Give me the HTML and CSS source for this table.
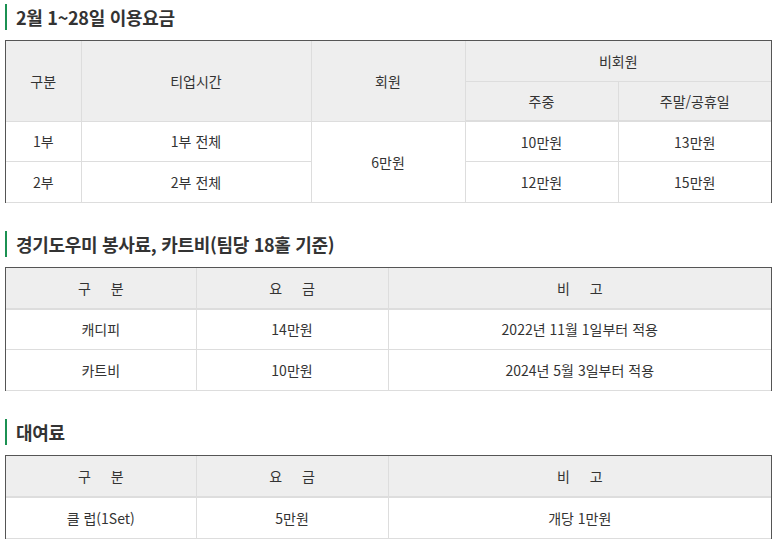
FILE: index.html
```html
<!DOCTYPE html>
<html lang="ko">
<head>
<meta charset="utf-8">
<link rel="stylesheet" href="styles.css">
</head>
<body>
<div class="page">
  <section class="section">
    <h2 class="title">2월 1~28일 이용요금</h2>
    <div class="tbl-wrap">
      <table class="tbl tbl-main">
        <colgroup><col class="c1-1"><col class="c1-2"><col class="c1-3"><col class="c1-4"><col></colgroup>
        <thead>
          <tr><th rowspan="2">구분</th><th rowspan="2">티업시간</th><th rowspan="2">회원</th><th colspan="2">비회원</th></tr>
          <tr><th>주중</th><th>주말/공휴일</th></tr>
        </thead>
        <tbody>
          <tr><td>1부</td><td>1부 전체</td><td rowspan="2">6만원</td><td>10만원</td><td>13만원</td></tr>
          <tr><td>2부</td><td>2부 전체</td><td>12만원</td><td>15만원</td></tr>
        </tbody>
      </table>
    </div>
  </section>

  <section class="section">
    <h2 class="title">경기도우미 봉사료, 카트비(팀당 18홀 기준)</h2>
    <div class="tbl-wrap">
      <table class="tbl tbl-spaced">
        <colgroup><col class="c2-1"><col class="c2-2"><col></colgroup>
        <thead>
          <tr><th>구 분</th><th>요 금</th><th>비 고</th></tr>
        </thead>
        <tbody>
          <tr><td>캐디피</td><td>14만원</td><td>2022년 11월 1일부터 적용</td></tr>
          <tr><td>카트비</td><td>10만원</td><td>2024년 5월 3일부터 적용</td></tr>
        </tbody>
      </table>
    </div>
  </section>

  <section class="section">
    <h2 class="title">대여료</h2>
    <div class="tbl-wrap">
      <table class="tbl tbl-spaced">
        <colgroup><col class="c2-1"><col class="c2-2"><col></colgroup>
        <thead>
          <tr><th>구 분</th><th>요 금</th><th>비 고</th></tr>
        </thead>
        <tbody>
          <tr><td>클 럽(1Set)</td><td>5만원</td><td>개당 1만원</td></tr>
        </tbody>
      </table>
    </div>
  </section>
</div>
</body>
</html>
```

FILE: styles.css
```css
* { box-sizing: border-box; }
html, body { margin: 0; padding: 0; background: #fff; }
body {
  font-family: "Noto Sans CJK KR", "Noto Sans", sans-serif;
  color: #333;
}
.page {
  padding: 4px 4px 0 5px;
}
.section + .section {
  margin-top: 28px;
}
.title {
  margin: 0 0 10px 0;
  border-left: 2px solid #1b9152;
  padding-left: 9px;
  font-size: 18px;
  line-height: 26px;
  height: 26px;
  font-weight: 700;
  color: #333;
  letter-spacing: -0.3px;
}
.tbl-wrap {
  border-top: 1px solid #555;
  border-left: 1px solid #555;
  border-right: 1px solid #555;
}
.tbl {
  width: 100%;
  border-collapse: collapse;
  table-layout: fixed;
  font-size: 14px;
  color: #333;
}
.tbl th, .tbl td {
  border: 1px solid #ddd;
  height: 41px;
  padding: 0;
  text-align: center;
  vertical-align: middle;
  font-weight: 400;
  line-height: 20px;
}
.tbl-main th { height: 40px; }
.tbl-main td { height: 40.5px; }
.tbl th { background: #eee; }
.tbl thead tr:first-child th { border-top: 0; }
.tbl tr > :first-child { border-left: 0; }
.tbl tr > :last-child { border-right: 0; }
.tbl thead tr:last-child th { border-bottom: 2px solid #ddd; }
.tbl-spaced th { word-spacing: 16px; }

.c1-1 { width: 75px; }
.c1-2 { width: 230px; }
.c1-3 { width: 154px; }
.c1-4 { width: 153px; }
.c2-1 { width: 190px; }
.c2-2 { width: 192px; }
```
